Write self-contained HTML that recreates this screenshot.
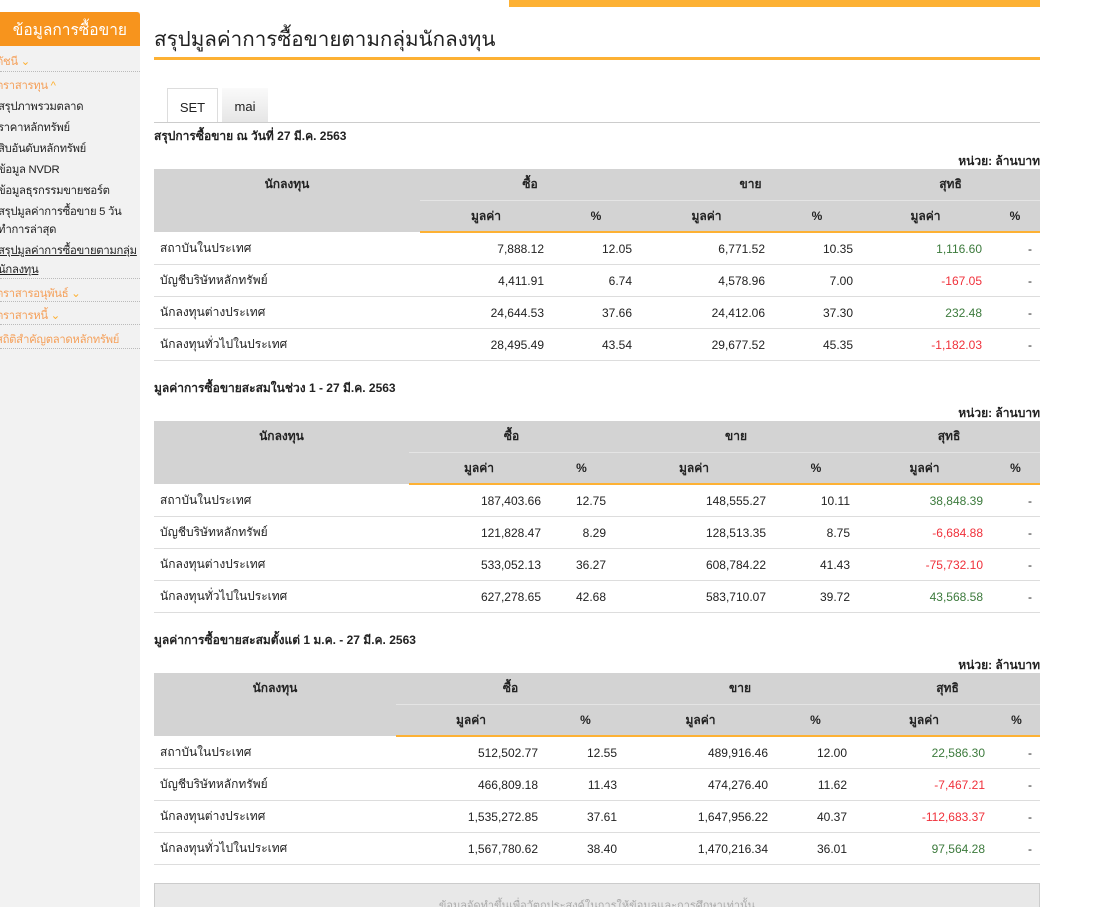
<!DOCTYPE html>
<html style="overflow:hidden"><head><meta charset="utf-8">
<style>
html,body{overflow:hidden}
body{margin:0;width:1100px;height:907px;background:#fff;font-family:"Liberation Sans","Noto Sans CJK SC",sans-serif;font-size:12px;color:#222;position:relative}
.topbar{position:absolute;left:509px;top:0;width:531px;height:7px;background:#fdb134}
.side{position:absolute;left:0;top:12px;width:140px;height:895px;background:#f2f2f2}
.sidehead{position:absolute;left:0;top:12px;width:140px;height:34px;background:#f7941d;border-radius:0 3px 0 0;color:#fff;font-size:15.5px;line-height:38px}
.sidehead span{position:absolute;right:13px;top:0}
.si{position:absolute;left:-2px;font-size:11.3px;letter-spacing:-0.3px;white-space:nowrap}
.or{color:#f5a05a}
.sep{position:absolute;left:0;width:140px;border-top:1px dotted #bbb}
.title{position:absolute;left:154px;top:23px;font-size:20.6px;color:#222}
.tline{position:absolute;left:154px;top:57px;width:886px;height:3px;background:#fdb134}
.tab{position:absolute;top:88px;height:34px;font-size:13px;line-height:38px;text-align:center}
.tabline{position:absolute;left:154px;top:122px;width:886px;border-top:1px solid #ccc}
.cap{position:absolute;left:154px;font-weight:bold;font-size:12px}
.unit{position:absolute;right:60px;font-weight:bold;font-size:12px}
table{position:absolute;left:154px;border-collapse:collapse;width:886px;font-size:12px}
th{background:#d3d3d3;font-weight:bold;height:31px;padding:0;text-align:center;color:#222}
tr.h2 th{border-bottom:2px solid #fdb134;height:30px}
tr.h2 th.e{border-bottom:none}
tr.h1 th.gb{border-bottom:1px solid #e4e4e4}
td{height:31px;border-bottom:1px solid #ddd;padding:0 8px;text-align:right}
td:first-child{text-align:left;padding-left:6px}
td:last-child{padding-right:8px}
.r{color:#f0303a}.g{color:#3c7a3c}
.foot{position:absolute;left:154px;top:883px;width:884px;height:40px;background:#e8e8e8;border:1px solid #ccc;text-align:center;color:#aaa;font-size:11px;line-height:44px}
</style></head><body>
<div class="topbar"></div>
<div class="side"></div>
<div class="sidehead"><span>ข้อมูลการซื้อขาย</span></div>
<div class="si or" style="top:52px;left:-4px">ดัชนี <span style="color:#fdb134">⌄</span></div>
<div class="sep" style="top:71px"></div>
<div class="si or" style="top:76px;left:-4px">ตราสารทุน <span style="color:#fdb134">^</span></div>
<div class="si" style="top:97px">สรุปภาพรวมตลาด</div>
<div class="si" style="top:118px">ราคาหลักทรัพย์</div>
<div class="si" style="top:139px">สิบอันดับหลักทรัพย์</div>
<div class="si" style="top:160px">ข้อมูล NVDR</div>
<div class="si" style="top:181px">ข้อมูลธุรกรรมขายชอร์ต</div>
<div class="si" style="top:202px">สรุปมูลค่าการซื้อขาย 5 วัน</div>
<div class="si" style="top:220px">ทำการล่าสุด</div>
<div class="si" style="top:241px;text-decoration:underline">สรุปมูลค่าการซื้อขายตามกลุ่ม</div>
<div class="si" style="top:260px;text-decoration:underline">นักลงทุน</div>
<div class="sep" style="top:278px"></div>
<div class="si or" style="top:284px;left:-4px">ตราสารอนุพันธ์ <span style="color:#fdb134">⌄</span></div>
<div class="sep" style="top:301px"></div>
<div class="si or" style="top:306px;left:-4px">ตราสารหนี้ <span style="color:#fdb134">⌄</span></div>
<div class="sep" style="top:324px"></div>
<div class="si or" style="top:330px;left:-4px">สถิติสำคัญตลาดหลักทรัพย์</div>
<div class="sep" style="top:348px"></div>

<div class="title">สรุปมูลค่าการซื้อขายตามกลุ่มนักลงทุน</div>
<div class="tline"></div>
<div class="tab" style="left:167px;width:49px;border:1px solid #ddd;border-bottom:none;background:#fff">SET</div>
<div class="tab" style="left:222px;width:46px;background:linear-gradient(#fafafa,#e6e6e6)">mai</div>
<div class="tabline"></div>

<div class="cap" style="top:127px">สรุปการซื้อขาย ณ วันที่ 27 มี.ค. 2563</div>
<div class="unit" style="top:152px">หน่วย: ล้านบาท</div>
<table style="top:169px">
<colgroup><col style="width:266px"><col style="width:132px"><col style="width:88px"><col style="width:133px"><col style="width:88px"><col style="width:129px"><col style="width:50px"></colgroup>
<tr class="h1"><th>นักลงทุน</th><th colspan="2" class="gb">ซื้อ</th><th colspan="2" class="gb">ขาย</th><th colspan="2" class="gb">สุทธิ</th></tr>
<tr class="h2"><th class="e"></th><th>มูลค่า</th><th>%</th><th>มูลค่า</th><th>%</th><th>มูลค่า</th><th>%</th></tr>
<tr><td>สถาบันในประเทศ</td><td>7,888.12</td><td>12.05</td><td>6,771.52</td><td>10.35</td><td class="g">1,116.60</td><td>-</td></tr>
<tr><td>บัญชีบริษัทหลักทรัพย์</td><td>4,411.91</td><td>6.74</td><td>4,578.96</td><td>7.00</td><td class="r">-167.05</td><td>-</td></tr>
<tr><td>นักลงทุนต่างประเทศ</td><td>24,644.53</td><td>37.66</td><td>24,412.06</td><td>37.30</td><td class="g">232.48</td><td>-</td></tr>
<tr><td>นักลงทุนทั่วไปในประเทศ</td><td>28,495.49</td><td>43.54</td><td>29,677.52</td><td>45.35</td><td class="r">-1,182.03</td><td>-</td></tr>
</table>

<div class="cap" style="top:379px">มูลค่าการซื้อขายสะสมในช่วง 1 - 27 มี.ค. 2563</div>
<div class="unit" style="top:404px">หน่วย: ล้านบาท</div>
<table style="top:421px">
<colgroup><col style="width:255px"><col style="width:140px"><col style="width:65px"><col style="width:160px"><col style="width:84px"><col style="width:133px"><col style="width:49px"></colgroup>
<tr class="h1"><th>นักลงทุน</th><th colspan="2" class="gb">ซื้อ</th><th colspan="2" class="gb">ขาย</th><th colspan="2" class="gb">สุทธิ</th></tr>
<tr class="h2"><th class="e"></th><th>มูลค่า</th><th>%</th><th>มูลค่า</th><th>%</th><th>มูลค่า</th><th>%</th></tr>
<tr><td>สถาบันในประเทศ</td><td>187,403.66</td><td>12.75</td><td>148,555.27</td><td>10.11</td><td class="g">38,848.39</td><td>-</td></tr>
<tr><td>บัญชีบริษัทหลักทรัพย์</td><td>121,828.47</td><td>8.29</td><td>128,513.35</td><td>8.75</td><td class="r">-6,684.88</td><td>-</td></tr>
<tr><td>นักลงทุนต่างประเทศ</td><td>533,052.13</td><td>36.27</td><td>608,784.22</td><td>41.43</td><td class="r">-75,732.10</td><td>-</td></tr>
<tr><td>นักลงทุนทั่วไปในประเทศ</td><td>627,278.65</td><td>42.68</td><td>583,710.07</td><td>39.72</td><td class="g">43,568.58</td><td>-</td></tr>
</table>

<div class="cap" style="top:631px">มูลค่าการซื้อขายสะสมตั้งแต่ 1 ม.ค. - 27 มี.ค. 2563</div>
<div class="unit" style="top:656px">หน่วย: ล้านบาท</div>
<table style="top:673px">
<colgroup><col style="width:242px"><col style="width:150px"><col style="width:79px"><col style="width:151px"><col style="width:79px"><col style="width:138px"><col style="width:47px"></colgroup>
<tr class="h1"><th>นักลงทุน</th><th colspan="2" class="gb">ซื้อ</th><th colspan="2" class="gb">ขาย</th><th colspan="2" class="gb">สุทธิ</th></tr>
<tr class="h2"><th class="e"></th><th>มูลค่า</th><th>%</th><th>มูลค่า</th><th>%</th><th>มูลค่า</th><th>%</th></tr>
<tr><td>สถาบันในประเทศ</td><td>512,502.77</td><td>12.55</td><td>489,916.46</td><td>12.00</td><td class="g">22,586.30</td><td>-</td></tr>
<tr><td>บัญชีบริษัทหลักทรัพย์</td><td>466,809.18</td><td>11.43</td><td>474,276.40</td><td>11.62</td><td class="r">-7,467.21</td><td>-</td></tr>
<tr><td>นักลงทุนต่างประเทศ</td><td>1,535,272.85</td><td>37.61</td><td>1,647,956.22</td><td>40.37</td><td class="r">-112,683.37</td><td>-</td></tr>
<tr><td>นักลงทุนทั่วไปในประเทศ</td><td>1,567,780.62</td><td>38.40</td><td>1,470,216.34</td><td>36.01</td><td class="g">97,564.28</td><td>-</td></tr>
</table>

<div class="foot">ข้อมูลจัดทำขึ้นเพื่อวัตถุประสงค์ในการให้ข้อมูลและการศึกษาเท่านั้น</div>
</body></html>
